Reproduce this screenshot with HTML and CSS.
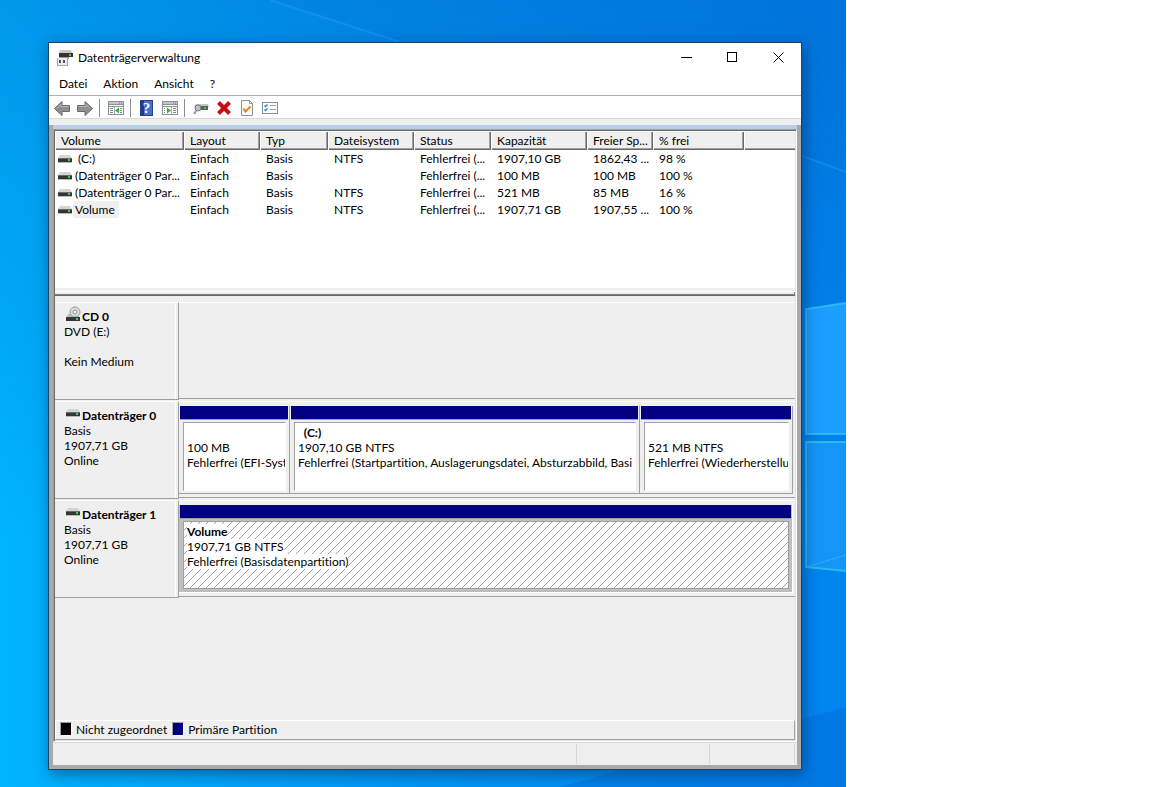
FILE: index.html
```html
<!DOCTYPE html>
<html lang="de">

<head>
    <meta charset="UTF-8">
    <meta name="viewport" content="width=device-width, initial-scale=1.0">
    <title>Datenträgerverwaltung</title>
    <link rel="stylesheet" href="styles.css">
</head>

<body>
    <!-- shared icons -->
    <svg class="sprite" aria-hidden="true">
        <symbol id="drive" viewBox="0 0 14 8">
            <polygon points="2,0 12,0 14,3 0,3" fill="#d4d4d4" />
            <rect x="0" y="3" width="14" height="4" fill="#353535" />
            <rect x="0" y="3" width="14" height="1" fill="#6b6b6b" />
            <rect x="10" y="4" width="2" height="2" fill="#2fdc3c" />
            <rect x="0" y="7" width="14" height="1" fill="#b9b9b9" />
        </symbol>
        <symbol id="cd" viewBox="0 0 15 16">
            <polygon points="2,8 12,8 14,12 0,12" fill="#bdbdbd" />
            <circle cx="9" cy="6" r="5" fill="#dcdcdc" stroke="#9c9c9c" />
            <circle cx="9" cy="6" r="2" fill="#f4f4f4" stroke="#8c8c8c" />
            <rect x="0" y="11" width="14" height="4" fill="#353535" />
            <rect x="10" y="12" width="2" height="2" fill="#2fdc3c" />
        </symbol>
        <symbol id="arrow" viewBox="0 0 16 15">
            <path d="M.5 7.500L8 .5v4h7.500v6H8v4z" fill="#8f8f8f" stroke="#6a6a6a" />
            <path d="M3 7.500L7 3.500v2h7.500" fill="none" stroke="#b9b9b9" />
        </symbol>
        <symbol id="panel" viewBox="0 0 16 14">
            <rect x="0" y="0" width="16" height="14" fill="#8b9197" />
            <rect x="1" y="1" width="14" height="2" fill="#c3c7cb" />
            <path d="M11 2h1M13 2h1" stroke="#6f767d" />
            <rect x="1" y="4" width="14" height="1" fill="#fff" />
            <rect x="1" y="6" width="14" height="7" fill="#fff" />
        </symbol>
    </svg>

    <div class="desktop">
        <svg class="wallpaper" viewBox="0 0 846 787" preserveAspectRatio="none" aria-hidden="true">
            <polygon points="270,0 846,0 846,172 400,42" fill="#0068cf" opacity=".12" />
            <path d="M270 0L400 42M802 156L846 172" stroke="#27a5f5" stroke-width="2" opacity=".4" fill="none" />
            <polygon points="806,309 846,303 846,434 806,434" fill="#1b9fff" />
            <polygon points="806,442 846,442 846,571 806,567" fill="#1695f8" />
            <path d="M846 303L806 309V434H846M846 442H806V567L846 571" fill="none" stroke="#2fc4f2" stroke-width="2" opacity=".8" />
            <path d="M846 555L806 567" stroke="#3cb8ff" opacity=".7" />
            <polygon points="560,787 846,707 846,787" fill="#0060cc" opacity=".3" />
        </svg>

        <main class="window">
            <header class="titlebar">
                <svg class="app-icon" width="16" height="16" viewBox="0 0 16 16">
                    <polygon points="3,0 14,0 16,4 2,4" fill="#c9c9c9" />
                    <rect x="2" y="3" width="14" height="4" fill="#333" />
                    <rect x="12" y="4" width="2" height="2" fill="#2fdc3c" />
                    <rect x="2" y="7" width="10" height="2" fill="#9b9b9b" />
                    <rect x="0" y="8" width="11" height="8" fill="#a8a8a8" />
                    <rect x="1" y="8" width="9" height="7" fill="#ececec" />
                    <path d="M3 10v3M7 10v3" stroke="#222" stroke-width="1.500" />
                </svg>
                <h1>Datenträgerverwaltung</h1>
                <div class="controls">
                    <button type="button" aria-label="Minimieren">
                        <svg width="11" height="11" viewBox="0 0 11 11"><path d="M0 5.500h11" stroke="#000" /></svg>
                    </button>
                    <button type="button" aria-label="Maximieren">
                        <svg width="11" height="11" viewBox="0 0 11 11"><rect x=".5" y=".5" width="9" height="9" fill="none" stroke="#000" /></svg>
                    </button>
                    <button type="button" aria-label="Schließen">
                        <svg width="11" height="11" viewBox="0 0 11 11"><path d="M.5 .5l10 10M10.500 .5l-10 10" stroke="#000" /></svg>
                    </button>
                </div>
            </header>

            <nav class="menu">
                <button type="button">Datei</button>
                <button type="button">Aktion</button>
                <button type="button">Ansicht</button>
                <button type="button">?</button>
            </nav>

            <div class="toolbar">
                <button type="button" aria-label="Zurück"><svg width="16" height="15"><use href="#arrow" /></svg></button>
                <button type="button" aria-label="Vorwärts"><svg class="flip" width="16" height="15"><use href="#arrow" /></svg></button>
                <span class="sep"></span>
                <button type="button" aria-label="Konsolenstruktur">
                    <svg width="16" height="14" viewBox="0 0 16 14">
                        <use href="#panel" />
                        <path d="M2 7.500h3M2 9.500h3M2 11.500h3M12 7.500h2M12 9.500h2M12 11.500h2" stroke="#7b8b9a" />
                        <path d="M6.500 6v7" stroke="#a9afb5" />
                        <polygon points="7,9.500 11,6.500 11,12.500" fill="#2fb52f" />
                    </svg>
                </button>
                <span class="sep"></span>
                <button type="button" aria-label="Hilfe"><span class="help">?</span></button>
                <button type="button" aria-label="Aktionsbereich">
                    <svg width="16" height="14" viewBox="0 0 16 14">
                        <use href="#panel" />
                        <path d="M2 7.500h1M2 9.500h1M2 11.500h1M11 7.500h3M11 9.500h3M11 11.500h3" stroke="#7b8b9a" />
                        <path d="M9.500 6v7" stroke="#a9afb5" />
                        <polygon points="9,9.500 5,6.500 5,12.500" fill="#2fb52f" />
                    </svg>
                </button>
                <span class="sep"></span>
                <button type="button" aria-label="Datenträger suchen">
                    <svg width="16" height="14" viewBox="0 0 16 14">
                        <polygon points="3,3 15,3 16,6 1,6" fill="#c4c4c4" />
                        <rect x="2" y="5" width="13" height="4" fill="#5c5c5c" />
                        <rect x="11" y="6" width="2" height="2" fill="#2fdc3c" />
                        <circle cx="5" cy="7" r="3" fill="#b8c4cc" stroke="#70787f" />
                        <path d="M3 10L1 13" stroke="#8494a3" stroke-width="2" />
                    </svg>
                </button>
                <button type="button" aria-label="Löschen">
                    <svg width="14" height="14" viewBox="0 0 14 14"><path d="M1.500 1.500l11 11M12.500 1.500l-11 11" stroke="#cc0a12" stroke-width="4" /></svg>
                </button>
                <button type="button" aria-label="Eigenschaften">
                    <svg width="12" height="16" viewBox="0 0 12 16">
                        <path d="M.5 .5h8l3 3v12H.5z" fill="#fbfbfb" stroke="#909090" />
                        <path d="M8.500 .5v3h3" fill="none" stroke="#909090" />
                        <path d="M2.500 8.500l2 3 5-5" fill="none" stroke="#e0821e" stroke-width="2" />
                    </svg>
                </button>
                <button type="button" aria-label="Optionen">
                    <svg width="16" height="12" viewBox="0 0 16 12">
                        <rect x=".5" y=".5" width="15" height="11" fill="#fcfcfc" stroke="#868d94" />
                        <path d="M2.500 3.500l1 1 2-2M2.500 7.500l1 1 2-2" fill="none" stroke="#2c82d4" stroke-width="1.500" />
                        <path d="M8 3.500h6M8 7.500h6" stroke="#a0a0a0" />
                    </svg>
                </button>
            </div>

            <div class="frame">
                <div class="pane">
                    <div class="volumes">
                        <table>
                            <colgroup>
                                <col class="c-volume"><col class="c-layout"><col class="c-type"><col class="c-fs"><col class="c-status"><col class="c-cap"><col class="c-free"><col class="c-percent"><col>
                            </colgroup>
                            <thead>
                                <tr>
                                    <th>Volume</th>
                                    <th>Layout</th>
                                    <th>Typ</th>
                                    <th>Dateisystem</th>
                                    <th>Status</th>
                                    <th>Kapazität</th>
                                    <th>Freier Sp...</th>
                                    <th>% frei</th>
                                    <th></th>
                                </tr>
                            </thead>
                            <tbody>
                                <tr>
                                    <td><svg width="14" height="8"><use href="#drive" /></svg><span>&nbsp;(C:)</span></td>
                                    <td>Einfach</td>
                                    <td>Basis</td>
                                    <td>NTFS</td>
                                    <td>Fehlerfrei (...</td>
                                    <td>1907,10 GB</td>
                                    <td>1862,43 ...</td>
                                    <td>98 %</td>
                                    <td></td>
                                </tr>
                                <tr>
                                    <td><svg width="14" height="8"><use href="#drive" /></svg><span>(Datenträger 0 Par...</span></td>
                                    <td>Einfach</td>
                                    <td>Basis</td>
                                    <td></td>
                                    <td>Fehlerfrei (...</td>
                                    <td>100 MB</td>
                                    <td>100 MB</td>
                                    <td>100 %</td>
                                    <td></td>
                                </tr>
                                <tr>
                                    <td><svg width="14" height="8"><use href="#drive" /></svg><span>(Datenträger 0 Par...</span></td>
                                    <td>Einfach</td>
                                    <td>Basis</td>
                                    <td>NTFS</td>
                                    <td>Fehlerfrei (...</td>
                                    <td>521 MB</td>
                                    <td>85 MB</td>
                                    <td>16 %</td>
                                    <td></td>
                                </tr>
                                <tr>
                                    <td><svg width="14" height="8"><use href="#drive" /></svg><span class="selected">Volume</span></td>
                                    <td>Einfach</td>
                                    <td>Basis</td>
                                    <td>NTFS</td>
                                    <td>Fehlerfrei (...</td>
                                    <td>1907,71 GB</td>
                                    <td>1907,55 ...</td>
                                    <td>100 %</td>
                                    <td></td>
                                </tr>
                            </tbody>
                        </table>
                    </div>
                    <div class="splitter"></div>

                    <div class="disks">
                        <section class="disk">
                            <div class="disk-label">
                                <h2><svg class="cd" width="15" height="16"><use href="#cd" /></svg>CD 0</h2>
                                <p>DVD (E:)</p>
                                <p>&nbsp;</p>
                                <p>Kein Medium</p>
                            </div>
                            <div class="disk-body"></div>
                        </section>

                        <section class="disk">
                            <div class="disk-label">
                                <h2><svg width="14" height="8"><use href="#drive" /></svg>Datenträger 0</h2>
                                <p>Basis</p>
                                <p>1907,71 GB</p>
                                <p>Online</p>
                            </div>
                            <div class="disk-body three">
                                <div class="part">
                                    <div class="bar"></div>
                                    <div class="info">
                                        <h3>&nbsp;</h3>
                                        <p>100 MB</p>
                                        <p>Fehlerfrei (EFI-Syst</p>
                                    </div>
                                </div>
                                <div class="part">
                                    <div class="bar"></div>
                                    <div class="info">
                                        <h3>&nbsp;&nbsp;(C:)</h3>
                                        <p>1907,10 GB NTFS</p>
                                        <p>Fehlerfrei (Startpartition, Auslagerungsdatei, Absturzabbild, Basi</p>
                                    </div>
                                </div>
                                <div class="part">
                                    <div class="bar"></div>
                                    <div class="info">
                                        <h3>&nbsp;</h3>
                                        <p>521 MB NTFS</p>
                                        <p>Fehlerfrei (Wiederherstellu</p>
                                    </div>
                                </div>
                            </div>
                        </section>

                        <section class="disk">
                            <div class="disk-label">
                                <h2><svg width="14" height="8"><use href="#drive" /></svg>Datenträger 1</h2>
                                <p>Basis</p>
                                <p>1907,71 GB</p>
                                <p>Online</p>
                            </div>
                            <div class="disk-body">
                                <div class="part active">
                                    <div class="bar"></div>
                                    <div class="info">
                                        <svg class="hatch" aria-hidden="true">
                                            <pattern id="lines" width="8" height="8" patternUnits="userSpaceOnUse">
                                                <path d="M0 7h1v1H0zM1 6h1v1H1zM2 5h1v1H2zM3 4h1v1H3zM4 3h1v1H4zM5 2h1v1H5zM6 1h1v1H6zM7 0h1v1H7z" fill="#a0a0a0" />
                                            </pattern>
                                            <rect width="100%" height="100%" fill="url(#lines)" />
                                        </svg>
                                        <h3><span>Volume</span></h3>
                                        <p><span>1907,71 GB NTFS</span></p>
                                        <p><span>Fehlerfrei (Basisdatenpartition)</span></p>
                                    </div>
                                </div>
                            </div>
                        </section>
                    </div>

                    <div class="legend">
                        <span class="swatch black"></span><span>Nicht zugeordnet</span>
                        <span class="swatch navy"></span><span>Primäre Partition</span>
                    </div>
                </div>
                <footer class="statusbar">
                    <span></span>
                    <span></span>
                    <span></span>
                </footer>
            </div>
        </main>
    </div>
</body>

</html>
```
FILE: styles.css
```css
* {
    margin: 0;
    padding: 0;
    box-sizing: border-box;
}

body {
    background-color: white;
    font-family: Lato, "Open Sans", sans-serif;
    font-size: 12px;
    font-variant-ligatures: none;
    line-height: 15px;
    color: black;
}

button {
    font: inherit;
    color: inherit;
    background: none;
    border: 0;
}

.sprite {
    position: absolute;
    width: 0;
    height: 0;
}

.desktop {
    position: relative;
    display: flex;
    width: 73.44%;
    min-height: 100vh;
    padding: 42px 44px 17px 48px;
    background: linear-gradient(to bottom, rgba(0, 80, 180, .28), rgba(0, 80, 180, 0) 70%), linear-gradient(to right, #00b4ff, #0096f4 50%, #0084ee);
}

.wallpaper {
    position: absolute;
    left: 0;
    top: 0;
    width: 100%;
    height: 100%;
}

.window {
    position: relative;
    display: flex;
    flex-direction: column;
    flex: 1;
    min-width: 0;
    border: 1px solid #17466b;
    background-color: #efefef;
    box-shadow: 2px 4px 14px rgba(0, 30, 80, .5);
}

/* title bar */
.titlebar {
    display: flex;
    align-items: center;
    height: 30px;
    padding-left: 8px;
    background-color: white;
}

.titlebar h1 {
    flex: 1;
    margin-left: 5px;
    padding-bottom: 2px;
    font-size: 12px;
    font-weight: normal;
}

.controls {
    display: flex;
}

.controls button {
    display: flex;
    align-items: center;
    justify-content: center;
    width: 46px;
    height: 30px;
    padding-bottom: 1px;
}

.menu {
    display: flex;
    gap: 16px;
    height: 23px;
    padding: 0 10px 2px;
    background-color: white;
    border-bottom: 1px solid #b0b0b0;
}

.toolbar {
    display: flex;
    align-items: center;
    height: 23px;
    padding: 2px 0 0 1px;
    background-color: white;
    border-bottom: 1px solid #d9d9d9;
}

.toolbar button {
    display: flex;
    align-items: center;
    justify-content: center;
    width: 23px;
    height: 20px;
}

.flip {
    transform: scaleX(-1);
}

.sep {
    width: 1px;
    height: 18px;
    margin: 0 4px 0 3px;
    background-color: #8d8d8d;
}

.help {
    width: 13px;
    height: 16px;
    border: 1px solid #27408f;
    background: linear-gradient(to right, #1f3a94 3px, #4a6fd0 3px);
    color: white;
    font-family: "Liberation Serif", serif;
    font-size: 15px;
    font-weight: bold;
    line-height: 14px;
}

/* main area */
.frame {
    display: flex;
    flex-direction: column;
    flex: 1;
    margin-top: 6px;
    border: 4px solid #a9a9a9;
    border-top: 0;
}

.frame::before {
    content: "";
    height: 4px;
    background-color: #b8cfe9;
}

.pane {
    display: flex;
    flex-direction: column;
    flex: 1;
    border: 1px solid;
    border-color: #a0a0a0 white white #a0a0a0;
    box-shadow: inset 1px 1px #696969, inset -1px -1px #e3e3e3;
    padding: 1px;
}

.volumes {
    height: 157px;
    background-color: white;
}

table {
    width: 100%;
    table-layout: fixed;
    border-collapse: collapse;
}

.c-volume {
    width: 129px;
}

.c-layout {
    width: 76px;
}

.c-type {
    width: 68px;
}

.c-fs {
    width: 86px;
}

.c-status {
    width: 77px;
}

.c-cap {
    width: 96px;
}

.c-free {
    width: 66px;
}

.c-percent {
    width: 91px;
}

th {
    height: 19px;
    padding-left: 6px;
    background-color: #efefef;
    box-shadow: inset 1px 1px white, inset -1px -1px #696969, inset -2px -2px #a0a0a0;
    font-weight: normal;
    text-align: left;
    white-space: nowrap;
}

th:last-child {
    box-shadow: inset 1px 1px white, inset 0 -1px #696969, inset 0 -2px #a0a0a0;
}

td {
    height: 17px;
    padding-left: 6px;
    white-space: nowrap;
}

td:first-child {
    display: flex;
    align-items: center;
    gap: 1px;
    padding-left: 3px;
}

td svg {
    flex: none;
}

td:first-child span {
    padding: 1px 4px 1px 2px;
}

td .selected {
    background-color: #efefef;
}

.splitter {
    height: 8px;
    background-color: #efefef;
    border-top: 3px solid #efefef;
    border-bottom: 1px solid #696969;
    box-shadow: inset 0 1px white, inset -1px -1px #808080;
}

/* graphical view */
.disks {
    flex: 1;
    padding-top: 5px;
}

.disk {
    display: flex;
    height: 99px;
    padding-top: 1px;
}

.disk-label {
    width: 124px;
    padding: 6px 0 0 9px;
    border-top: 1px solid white;
    border-bottom: 1px solid #a0a0a0;
    border-right: 1px solid #a0a0a0;
    box-shadow: inset -2px 0 #efefef, inset -3px 0 white;
    white-space: nowrap;
}

.disk-label h2 {
    display: flex;
    gap: 2px;
    height: 15px;
    padding-left: 2px;
    font-size: 12px;
    line-height: 15px;
}

.disk-label svg {
    flex: none;
    margin-top: 1px;
}

.disk-label .cd {
    margin: -3px -1px 0 0;
}

.disk-body {
    display: grid;
    flex: 1;
    min-width: 0;
    margin-bottom: 1px;
    padding: 4px 2px 3px 0;
    border-top: 1px solid white;
    border-bottom: 1px solid #a0a0a0;
}

.three {
    grid-template-columns: 111fr 350fr 153fr;
}

.part {
    display: flex;
    flex-direction: column;
    min-width: 0;
    border-right: 1px solid #a0a0a0;
    border-bottom: 1px solid #a0a0a0;
}

.bar {
    height: 14px;
    margin-left: 1px;
    margin-right: 1px;
    background-color: navy;
    border-bottom: 1px solid #a0a0a0;
}

.info {
    position: relative;
    flex: 1;
    margin: 2px 3px 2px 4px;
    padding: 2px 0 2px 3px;
    overflow: hidden;
    background-color: white;
    border: 1px solid;
    border-color: #a0a0a0 white white #a0a0a0;
    white-space: nowrap;
}

.info h3 {
    font-size: 12px;
    line-height: 15px;
}

.active {
    background-color: #bfbfbf;
    border-color: white;
}

.active .info {
    margin-bottom: 3px;
    border-color: #a0a0a0;
}

.hatch {
    position: absolute;
    left: 0;
    top: 0;
    width: 100%;
    height: 100%;
}

.active .info span {
    position: relative;
    background-color: white;
}

.legend {
    display: flex;
    align-items: center;
    height: 20px;
    padding: 0 0 2px 4px;
    border: 1px solid;
    border-color: white #a0a0a0 #a0a0a0 white;
}

.legend span {
    margin-right: 5px;
}

.legend .swatch {
    width: 12px;
    height: 14px;
    margin-right: 4px;
    border: 1px solid;
    border-color: #a0a0a0 white white #a0a0a0;
}

.legend .black {
    background-color: black;
}

.legend .navy {
    background-color: navy;
}

.statusbar {
    display: grid;
    grid-template-columns: 1fr 133px 85px;
    height: 23px;
    padding: 1px 2px 1px 0;
    border-top: 1px solid #d7d7d7;
}

.statusbar span {
    border-right: 1px solid #d7d7d7;
}
```
